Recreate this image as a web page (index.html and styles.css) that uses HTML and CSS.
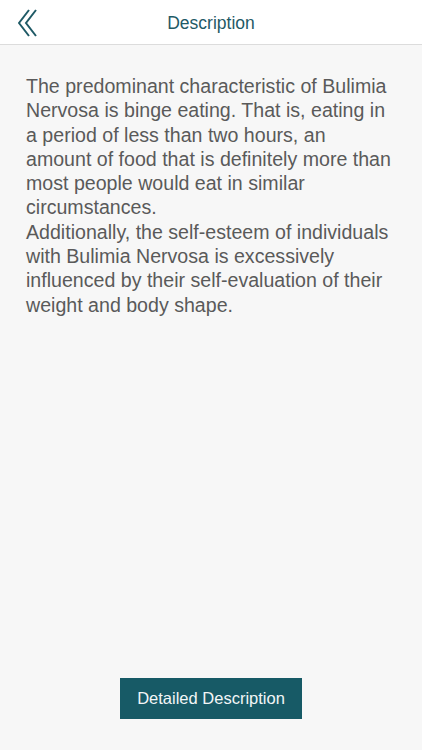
FILE: index.html
```
<!DOCTYPE html>
<html>
<head>
<meta charset="utf-8">
<link rel="stylesheet" href="styles.css">
</head>
<body>
<div class="screen">
  <header class="nav">
    <svg class="back" width="24" height="28" viewBox="0 0 24 28">
      <polyline points="11,1 1,14 11,27" fill="none" stroke="#1f5a66" stroke-width="2"/>
      <polyline points="18,1 8,14 18,27" fill="none" stroke="#1f5a66" stroke-width="2"/>
    </svg>
    <h1 class="title">Description</h1>
  </header>
  <main class="content">
    <p class="text">The predominant characteristic of Bulimia Nervosa is binge eating. That is, eating in a period of less than two hours, an amount of food that is definitely more than most people would eat in similar circumstances.<br>Additionally, the self-esteem of individuals with Bulimia Nervosa is excessively influenced by their self-evaluation of their weight and body shape.</p>
  </main>
  <footer class="footer">
    <button class="btn">Detailed Description</button>
  </footer>
</div>
</body>
</html>
```
FILE: styles.css
```
html, body {
  margin: 0;
  padding: 0;
  background: #f7f7f7;
  font-family: "Liberation Sans", Arial, sans-serif;
}
.screen {
  width: 422px;
  height: 750px;
  display: flex;
  flex-direction: column;
}
.nav {
  height: 44px;
  background: #ffffff;
  border-bottom: 1px solid #dcdcdc;
  position: relative;
  display: flex;
  align-items: center;
  justify-content: center;
}
.back {
  position: absolute;
  left: 18px;
  top: 9px;
}
.title {
  margin: 0;
  padding-top: 2px;
  font-size: 17.5px;
  font-weight: normal;
  color: #1f5a66;
}
.content {
  flex: 1;
  padding: 29px 27px 0 26px;
}
.text {
  margin: 0;
  font-size: 19.6px;
  line-height: 24.3px;
  color: #5a5a5a;
  font-weight: normal;
}
.footer {
  display: flex;
  justify-content: center;
  padding-bottom: 31px;
}
.btn {
  width: 182px;
  height: 41px;
  border: none;
  background: #175a66;
  color: #f2f6f7;
  font-family: "Liberation Sans", Arial, sans-serif;
  font-size: 16.5px;
  padding: 0;
}
```
